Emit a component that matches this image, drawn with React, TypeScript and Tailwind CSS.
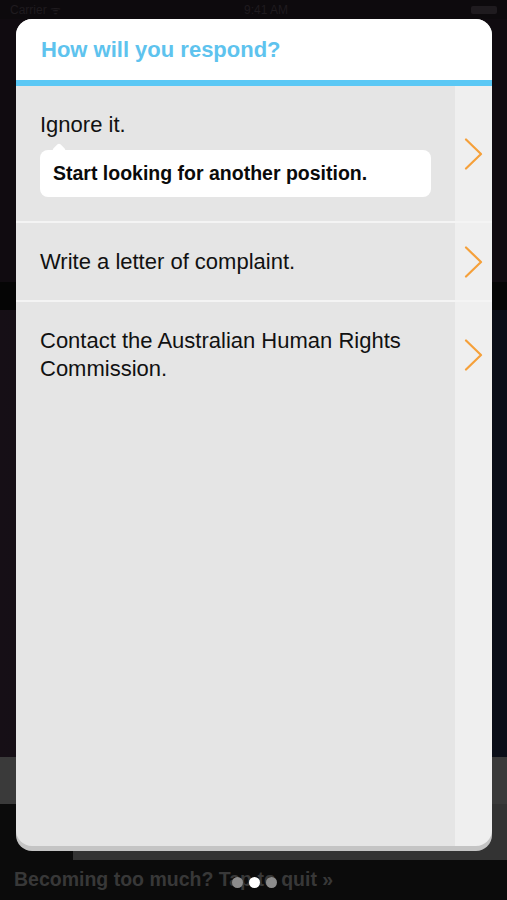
const options = [
    { id: 1, text: 'Ignore it.', hint: 'Start looking for another position.' },
    { id: 2, text: 'Write a letter of complaint.' },
    { id: 3, text: 'Contact the Australian Human Rights Commission.' },
];

function Chevron() {
    return (
        <svg width="19" height="32" viewBox="0 0 19 32" fill="none">
            <path d="M2 1.5 L17 16 L2 30.5" stroke="#f5a03a" strokeWidth="2.2" strokeLinecap="round" strokeLinejoin="round" />
        </svg>
    );
}

export default function App() {
    return (
        <div className="relative h-[900px] w-[507px] overflow-hidden bg-[#0d0a0d] font-['Liberation_Sans',Arial,sans-serif]">
            {/* screen behind the dialog */}
            <div className="flex h-full flex-col">
                <div className="flex h-[19px] items-center justify-between px-[10px] text-[12px] text-[#1f1b1f]">
                    <span>Carrier ᯤ</span>
                    <span>9:41 AM</span>
                    <span className="h-[8px] w-[26px] rounded-[2px] bg-[#1f1b1f]"></span>
                </div>
                <div className="h-[263px] bg-[#100b10]"></div>
                <div className="h-[28px] bg-[#050505]"></div>
                <div className="h-[447px] bg-gradient-to-r from-[#160f16] to-[#0a0e18]"></div>
                <div className="h-[47px] bg-[#3a3a3a]"></div>
                <div className="flex h-[56px]">
                    <div className="w-[73px] bg-[#0b0b0b]"></div>
                    <div className="flex-1 bg-[#333333]"></div>
                </div>
                <div className="relative flex flex-1 items-center bg-[#0b0b0b] px-[14px]">
                    <span className="text-[19.5px] font-bold text-[#383838]">Becoming too much? Tap to quit »</span>
                    <div className="absolute left-[232px] top-[17px] flex gap-[6px]">
                        <span className="h-[11px] w-[11px] rounded-full bg-[#8c8c8c]"></span>
                        <span className="h-[11px] w-[11px] rounded-full bg-white"></span>
                        <span className="h-[11px] w-[11px] rounded-full bg-[#8c8c8c]"></span>
                    </div>
                </div>
            </div>

            {/* dialog */}
            <div className="absolute left-[16px] top-[19px] flex h-[832px] w-[476px] flex-col overflow-hidden rounded-[16px] bg-[#c4c4c4]">
                <div className="flex h-[61px] items-center bg-white px-[25px]">
                    <h2 className="text-[22px] font-bold text-[#5ec3ee]">How will you respond?</h2>
                </div>
                <div className="h-[6px] bg-[#5bc8f5]"></div>

                <div className="mb-[5px] flex flex-1 flex-col overflow-hidden rounded-b-[16px]">
                    {options.map((o, i) => (
                        <div key={o.id} className={i < options.length - 1 ? 'border-b-2 border-[#f4f4f4]' : ''}>
                            <div className="flex">
                                <div className="flex-1 bg-[#e5e5e5] pb-[24px] pl-[24px] pr-[24px] pt-[25px]">
                                    <p className="text-[22px] leading-[28px] text-[#111]">{o.text}</p>
                                    {o.hint && (
                                        <div className="relative mt-[11px] rounded-[8px] bg-white px-[13px] py-[12px]">
                                            <span className="absolute -top-[5px] left-[14px] h-[10px] w-[10px] rotate-45 rounded-[2px] bg-white"></span>
                                            <p className="relative text-[19.5px] font-bold leading-[23px] text-[#0a0a0a]">{o.hint}</p>
                                        </div>
                                    )}
                                </div>
                                <div className="flex w-[37px] items-center justify-center bg-[#efefef]">
                                    <Chevron />
                                </div>
                            </div>
                        </div>
                    ))}
                    <div className="flex flex-1">
                        <div className="flex-1 bg-[#e5e5e5]"></div>
                        <div className="w-[37px] bg-[#efefef]"></div>
                    </div>
                </div>
            </div>
        </div>
    );
}
